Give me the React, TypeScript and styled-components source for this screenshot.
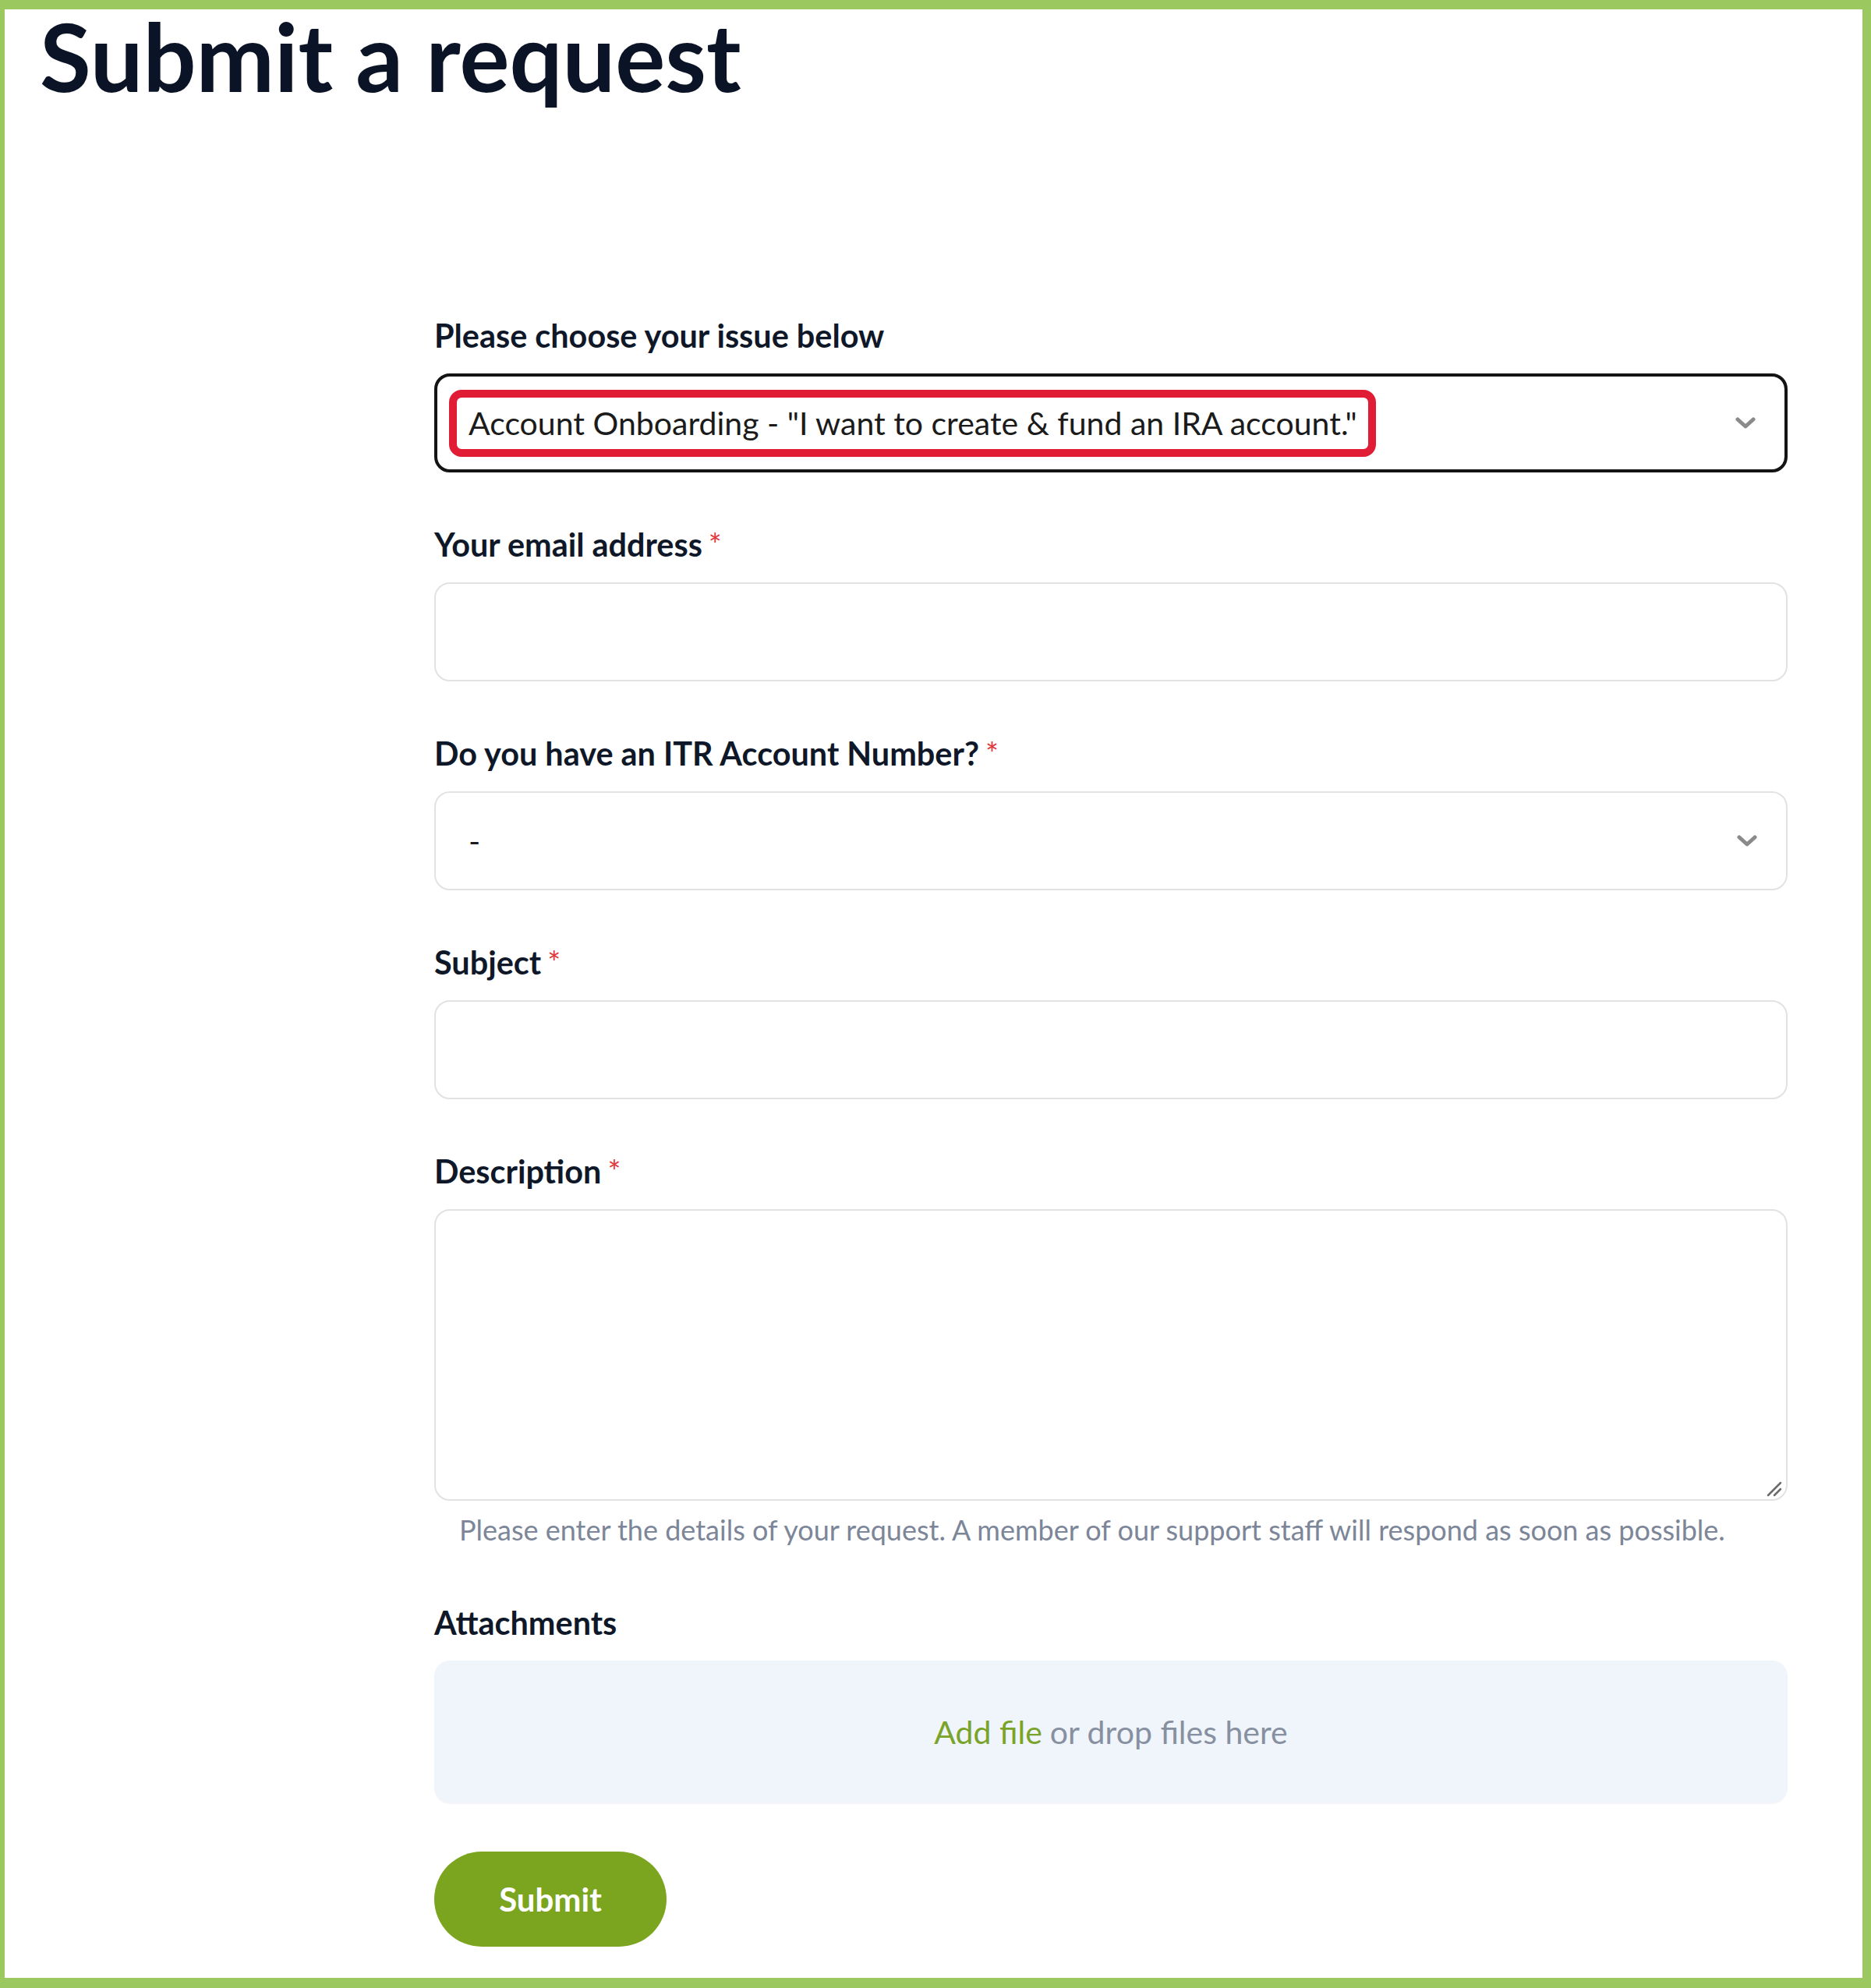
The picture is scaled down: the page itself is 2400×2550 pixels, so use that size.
import React from "react";
import styled, { createGlobalStyle } from "styled-components";

const GlobalStyle = createGlobalStyle`
  html, body {
    margin: 0;
    padding: 0;
    background: #ffffff;
  }
  body {
    font-family: Lato, "Open Sans", "Liberation Sans", sans-serif;
  }
  * { box-sizing: border-box; }
`;

const Frame = styled.div`
  width: 2400px;
  height: 2550px;
  border-style: solid;
  border-color: #9bc95f;
  border-width: 12px 11px 13px 6px;
  background: #ffffff;
  overflow: hidden;
`;

const Title = styled.h1`
  margin: 0;
  padding-left: 45px;
  font-family: Lato, "Liberation Sans", sans-serif;
  font-weight: 700;
  font-size: 120px;
  line-height: 120px;
  color: #0b1426;
`;

const Form = styled.form`
  margin: 273px 0 0 551px;
  width: 1736px;
  display: flex;
  flex-direction: column;
  gap: 67px;
`;

const Field = styled.div`
  display: flex;
  flex-direction: column;
  gap: 24px;
`;

const Label = styled.label`
  font-family: Lato, "Liberation Sans", sans-serif;
  font-weight: 700;
  font-size: 41.4px;
  line-height: 50px;
  height: 50px;
  color: #0f1828;
`;

const Required = styled.span`
  color: #e0393e;
  margin-left: 8px;
  font-weight: 400;
  font-size: 40px;
  line-height: 0;
`;

const SelectBox = styled.div<{ $active?: boolean }>`
  position: relative;
  height: 127px;
  display: flex;
  align-items: center;
  padding: 0 37px 0 ${(p) => (p.$active ? 40 : 42)}px;
  border: ${(p) => (p.$active ? "4px solid #141414" : "2px solid #e2e2e2")};
  border-radius: 20px;
  background: #ffffff;
  font-family: Lato, "Liberation Sans", sans-serif;
  font-size: 41px;
  color: #1b1b1b;
`;

const SelectValue = styled.span`
  flex: 1;
  white-space: nowrap;
`;

const Highlight = styled.span`
  display: inline-block;
  margin-left: -25px;
  padding: 8px 14px 8px 15px;
  border: 10px solid #e11d35;
  border-radius: 16px;
  line-height: 50px;
`;

const Chevron = () => (
  <svg width="26" height="16" viewBox="0 0 26 16" aria-hidden="true">
    <polyline
      points="3,3 13,12 23,3"
      fill="none"
      stroke="#8a8a8a"
      strokeWidth="5"
      strokeLinecap="round"
      strokeLinejoin="round"
    />
  </svg>
);

const TextInput = styled.input`
  height: 127px;
  width: 100%;
  padding: 0 42px;
  border: 2px solid #e2e2e2;
  border-radius: 20px;
  background: #ffffff;
  font-family: Lato, "Liberation Sans", sans-serif;
  font-size: 41px;
  color: #1b1b1b;
  outline: none;
`;

const TextAreaWrap = styled.div`
  position: relative;
  height: 374px;
`;

const TextArea = styled.textarea`
  display: block;
  width: 100%;
  height: 100%;
  padding: 30px 42px;
  border: 2px solid #e2e2e2;
  border-radius: 20px;
  background: #ffffff;
  font-family: Lato, "Liberation Sans", sans-serif;
  font-size: 41px;
  resize: none;
  outline: none;
`;

const Grip = styled.svg`
  position: absolute;
  right: 6px;
  bottom: 4px;
`;

const Hint = styled.p`
  margin: -11px 0 3px 0;
  padding-left: 32px;
  font-family: Lato, "Liberation Sans", sans-serif;
  font-size: 36px;
  line-height: 48px;
  color: #7c8698;
`;

const Dropzone = styled.div`
  height: 182px;
  display: flex;
  align-items: center;
  justify-content: center;
  border-radius: 20px;
  background: #f0f4fb;
  box-shadow: 0 2px 0 #f4f6f9;
  font-family: Lato, "Liberation Sans", sans-serif;
  font-size: 41px;
  color: #8790a0;
`;

const AddFile = styled.span`
  color: #7aa32a;
  margin-right: 10px;
`;

const SubmitButton = styled.button`
  align-self: flex-start;
  width: 298px;
  height: 122px;
  margin-top: -4px;
  border: none;
  border-radius: 61px;
  background: #7ba41f;
  color: #ffffff;
  font-family: Lato, "Liberation Sans", sans-serif;
  font-weight: 700;
  font-size: 42px;
  cursor: pointer;
`;

export default function App() {
  return (
    <>
      <GlobalStyle />
      <Frame>
        <Title>Submit a request</Title>
        <Form onSubmit={(e) => e.preventDefault()}>
          <Field>
            <Label>Please choose your issue below</Label>
            <SelectBox $active>
              <SelectValue>
                <Highlight>Account Onboarding - "I want to create &amp; fund an IRA account."</Highlight>
              </SelectValue>
              <Chevron />
            </SelectBox>
          </Field>
          <Field>
            <Label>
              Your email address<Required>*</Required>
            </Label>
            <TextInput type="email" />
          </Field>
          <Field>
            <Label>
              Do you have an ITR Account Number?<Required>*</Required>
            </Label>
            <SelectBox>
              <SelectValue>-</SelectValue>
              <Chevron />
            </SelectBox>
          </Field>
          <Field>
            <Label>
              Subject<Required>*</Required>
            </Label>
            <TextInput type="text" />
          </Field>
          <Field>
            <Label>
              Description<Required>*</Required>
            </Label>
            <TextAreaWrap>
              <TextArea />
              <Grip width="22" height="22" viewBox="0 0 22 22" aria-hidden="true">
                <line x1="3" y1="19" x2="19" y2="3" stroke="#6b6b6b" strokeWidth="2.5" strokeLinecap="round" />
                <line x1="11" y1="19" x2="19" y2="11" stroke="#6b6b6b" strokeWidth="2.5" strokeLinecap="round" />
              </Grip>
            </TextAreaWrap>
            <Hint>
              Please enter the details of your request. A member of our support staff will respond as soon as possible.
            </Hint>
          </Field>
          <Field>
            <Label>Attachments</Label>
            <Dropzone>
              <AddFile>Add file</AddFile>or drop files here
            </Dropzone>
          </Field>
          <SubmitButton type="submit">Submit</SubmitButton>
        </Form>
      </Frame>
    </>
  );
}
